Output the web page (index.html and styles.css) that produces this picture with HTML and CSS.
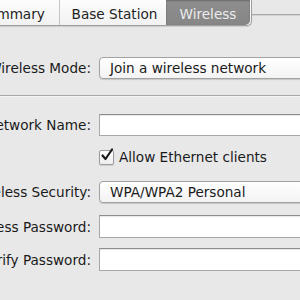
FILE: index.html
```html
<!DOCTYPE html>
<html lang="en">
<head>
    <meta charset="UTF-8">
    <title>Wireless</title>
    <link rel="stylesheet" href="styles.css">
</head>
<body>
    <div class="tabview">
        <div class="tabs">
            <div class="tab tab-summary">Summary</div>
            <div class="tab tab-base">Base Station</div>
            <div class="tab tab-active">Wireless</div>
        </div>
    </div>
    <div class="form">
        <div class="row row-mode">
            <div class="label">Wireless Mode:</div>
            <div class="popup">Join a wireless network</div>
        </div>
        <div class="separator"></div>
        <div class="row row-name">
            <div class="label">Network Name:</div>
            <div class="field"></div>
        </div>
        <div class="row row-check">
            <div class="label"></div>
            <label class="check">
                <span class="box">
                    <svg width="16" height="16" viewBox="0 0 16 16">
                        <path d="M3.5 8.5 L6.5 12 L13 2.5" fill="none" stroke="#1c1c1c" stroke-width="2.2" stroke-linecap="round" stroke-linejoin="round"/>
                    </svg>
                </span>
                Allow Ethernet clients
            </label>
        </div>
        <div class="row row-sec">
            <div class="label">Wireless Security:</div>
            <div class="popup">WPA/WPA2 Personal</div>
        </div>
        <div class="row row-pass">
            <div class="label">Wireless Password:</div>
            <div class="field"></div>
        </div>
        <div class="row row-verify">
            <div class="label">Verify Password:</div>
            <div class="field"></div>
        </div>
    </div>
</body>
</html>
```

FILE: styles.css
```css
html, body {
    margin: 0;
    padding: 0;
    width: 300px;
    height: 300px;
    overflow: hidden;
}
body {
    background-color: #e8e8e8;
    font-family: "DejaVu Sans", "Lucida Grande", sans-serif;
    font-size: 13.6px;
    color: #1a1a1a;
}
.tabview {
    position: relative;
    height: 26px;
}
.tabview::before {
    content: "";
    position: absolute;
    left: 0;
    right: 0;
    top: 14px;
    height: 1px;
    background: #a9a9a9;
    box-shadow: 0 1px 0 #d2d2d2;
}
.tabs {
    position: relative;
    display: flex;
    margin-left: -36px;
    height: 25px;
    width: 286px;
    border: 1px solid #9e9e9e;
    border-top: none;
    border-radius: 0 0 5px 5px;
    background: linear-gradient(#fdfdfd, #f1f1f1);
    box-shadow: 0 1px 1px rgba(0, 0, 0, 0.12);
}
.tab {
    display: flex;
    align-items: center;
    justify-content: center;
    height: 25px;
    padding-top: 2px;
    box-sizing: border-box;
    white-space: nowrap;
    color: #222;
}
.tab-summary {
    width: 95px;
    border-right: 1px solid #c4c4c4;
}
.tab-base {
    width: 106px;
    padding-left: 3px;
}
.tab-active {
    width: 84px;
    background: linear-gradient(#8e8e8e, #868686);
    color: #ececec;
    border-radius: 0 0 5px 0;
    box-shadow: inset 0 1px 2px rgba(0, 0, 0, 0.25);
}
.form {
    display: flex;
    flex-direction: column;
}
.row {
    display: flex;
    align-items: center;
    gap: 8px;
    height: 22px;
}
.label {
    width: 91px;
    flex: none;
    display: flex;
    justify-content: flex-end;
    white-space: nowrap;
}
.popup {
    flex: none;
    width: 220px;
    height: 22px;
    box-sizing: border-box;
    padding-left: 10px;
    display: flex;
    align-items: center;
    white-space: nowrap;
    background: linear-gradient(#ffffff, #f3f3f3);
    border: 1px solid #a2a2a2;
    border-radius: 4px;
    box-shadow: 0 1px 1px rgba(0, 0, 0, 0.15);
}
.field {
    flex: none;
    width: 220px;
    height: 22px;
    box-sizing: border-box;
    background: #fff;
    border: 1px solid #a8a8a8;
    border-top-color: #8c8c8c;
    box-shadow: inset 0 1px 1px rgba(0, 0, 0, 0.1);
}
.row-mode {
    margin-top: 31px;
}
.separator {
    margin-top: 16px;
    height: 1px;
    background: #a8a8a8;
    box-shadow: 0 1px 0 #f4f4f4;
}
.row-name {
    margin-top: 18px;
}
.row-check {
    margin-top: 12px;
    height: 18px;
}
.check {
    display: flex;
    align-items: center;
    gap: 5px;
    white-space: nowrap;
}
.box {
    position: relative;
    width: 15px;
    height: 15px;
    box-sizing: border-box;
    background: linear-gradient(#ffffff, #ededed);
    border: 1px solid #9c9c9c;
    border-radius: 2px;
    box-shadow: 0 1px 1px rgba(0, 0, 0, 0.12);
}
.box svg {
    position: absolute;
    left: -1px;
    top: -4px;
}
.row-sec {
    margin-top: 15px;
}
.row-pass {
    margin-top: 12px;
    height: 23px;
}
.row-pass .field,
.row-verify .field {
    height: 23px;
}
.row-verify {
    margin-top: 10px;
    height: 23px;
}
```
